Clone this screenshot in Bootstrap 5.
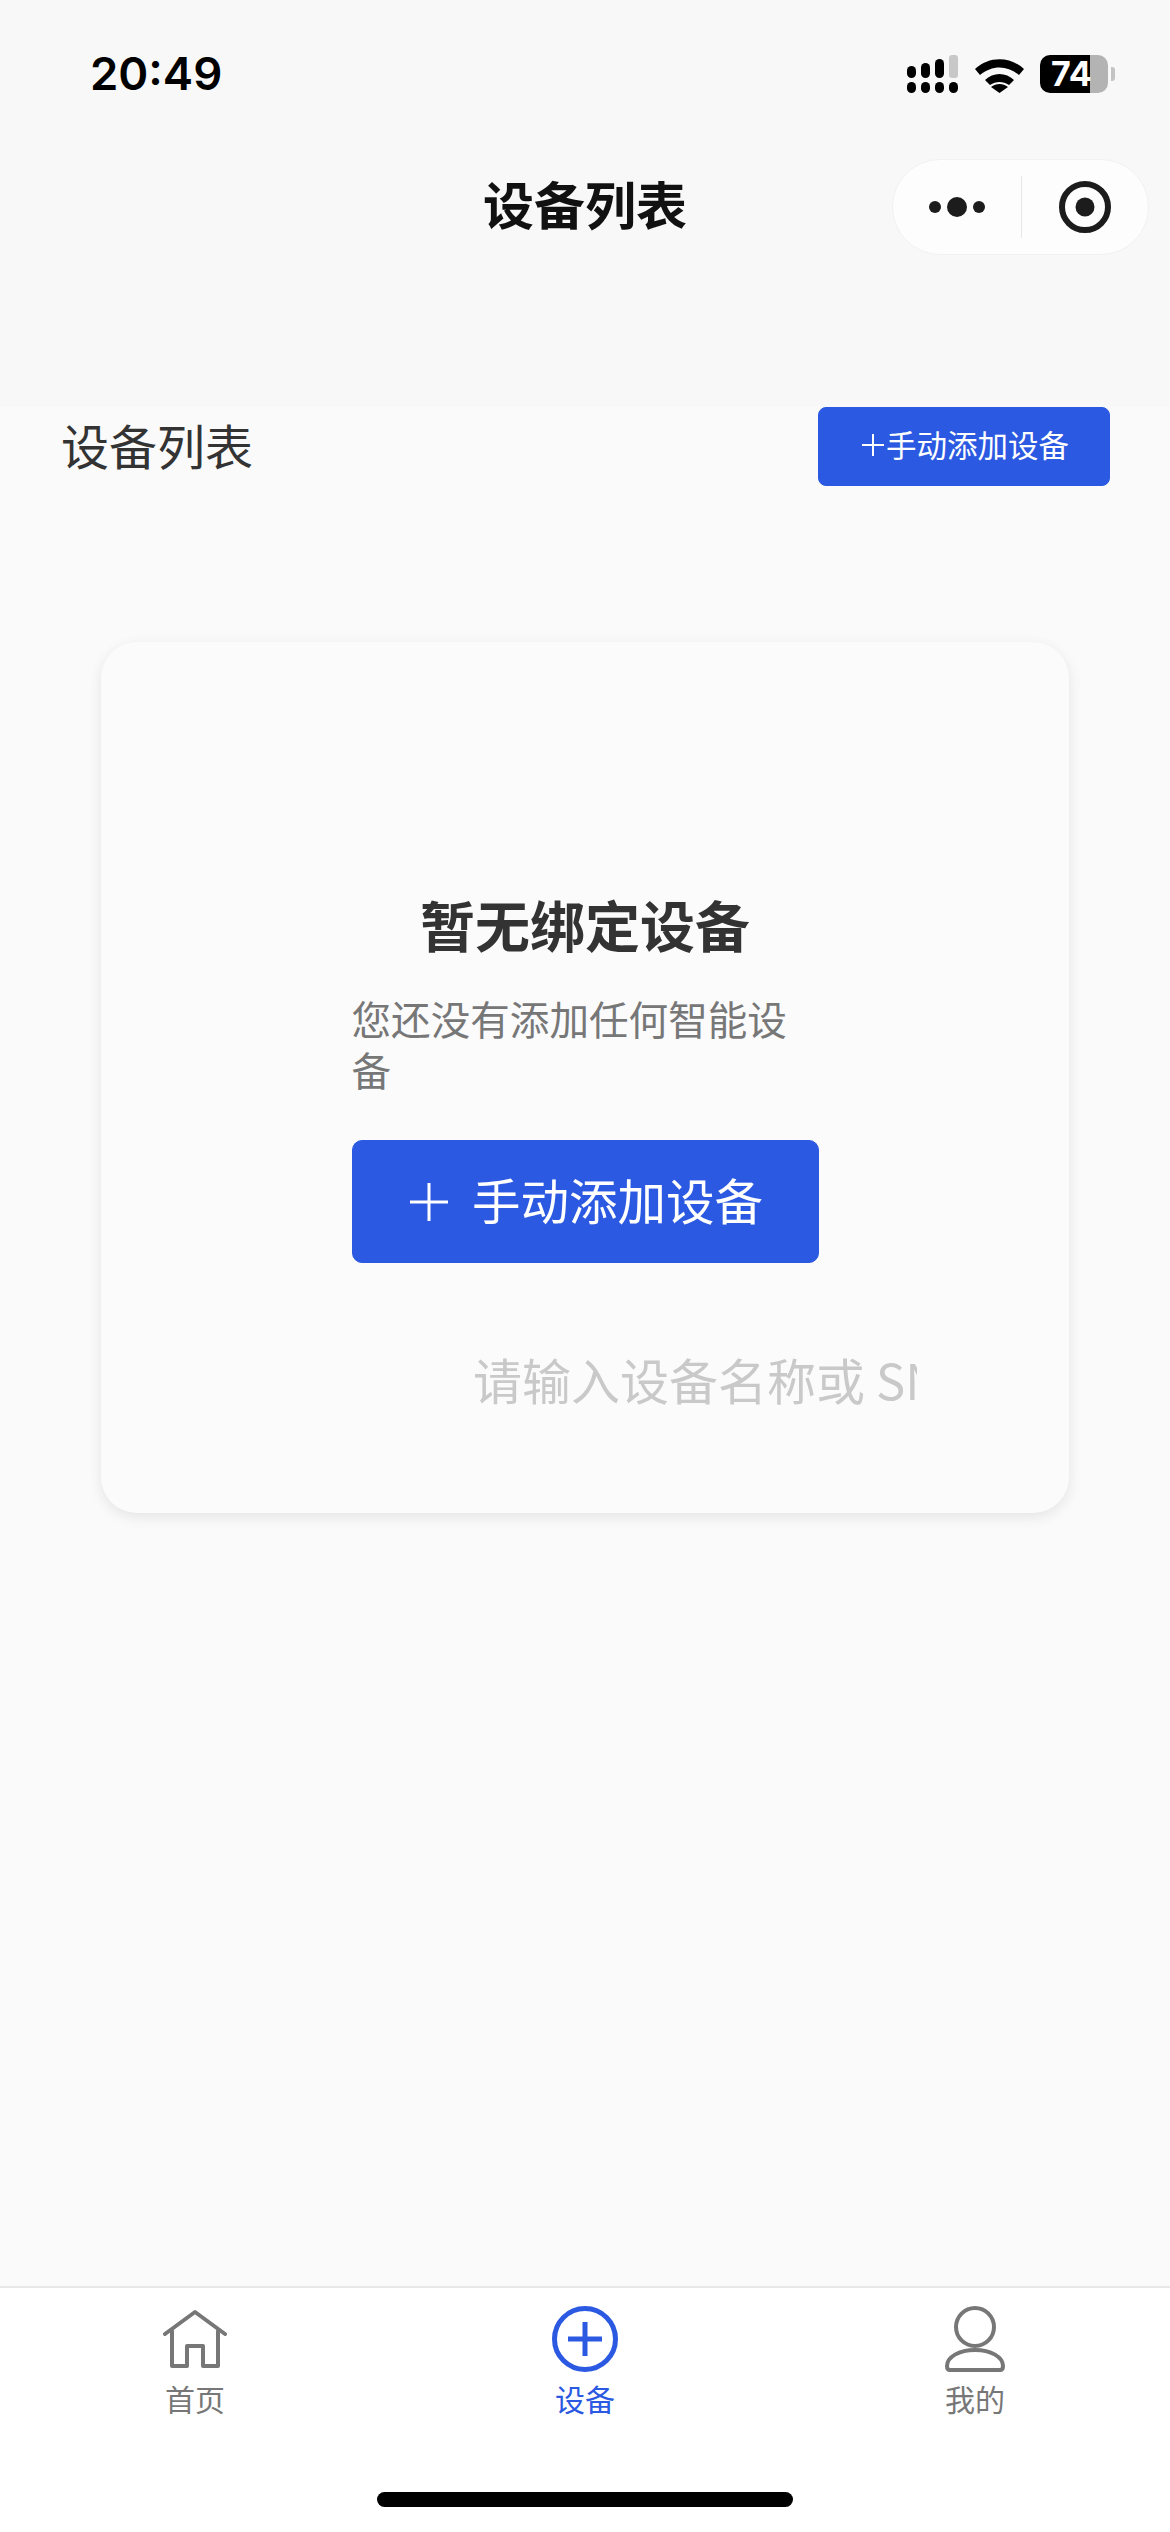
<!DOCTYPE html>
<html lang="zh-CN">
<head>
<meta charset="utf-8">
<title>设备列表</title>
<link href="https://cdn.jsdelivr.net/npm/bootstrap@5.3.0/dist/css/bootstrap.min.css" rel="stylesheet">
<style>
html,body{margin:0;height:100%}
body{background:#fafafa;font-family:"Noto Sans CJK SC","Liberation Sans",sans-serif}
.screen{width:1170px;height:2532px;overflow:hidden}
.top-area{height:407px;background:#f8f8f8;flex:none}
.status-line{height:148px;padding:0 55px 0 90px}
.clock{font-family:Inter,"Liberation Sans",sans-serif;font-weight:600;font-size:45.500px;color:#000;line-height:1}
.sig{width:51px;height:38px;margin-right:17px}
.wifi{width:49px;height:37px;margin-right:16px}
.batt{width:68px;height:38px;border-radius:10px;background:linear-gradient(90deg,#000 0 50px,#b3b3b3 50px 68px);color:#fff;font-family:Inter,"Liberation Sans",sans-serif;font-weight:700;font-size:34px;line-height:38px;padding-left:11px}
.batt-tip{width:4px;height:14px;background:#c4c4c4;border-radius:0 3px 3px 0;margin-left:3px}
.nav-line{height:118px;display:grid;grid-template-columns:1fr auto 1fr;align-items:center}
.nav-name{font-size:51px;font-weight:700;color:#111;line-height:1;white-space:nowrap;padding-bottom:7px}
.pill{justify-self:end;width:257px;height:96px;margin-right:21px;background:#fdfdfd;border:1px solid #f1f1f1;border-radius:48px}
.pill-half{width:128px;height:62px}
.pill-half+.pill-half{border-left:1px solid #e6e6e6}
.dots{margin-left:8px}
.head-row{padding:0 60px 0 61px}
.head-name{font-size:48px;color:#333;line-height:1.3;padding-bottom:4px}
.btn.add-small{--bs-btn-bg:#2b59e1;--bs-btn-hover-bg:#2b59e1;--bs-btn-color:#fff;--bs-btn-border-color:#2b59e1;width:292px;height:79px;padding:0 0 4px 3px;font-size:30.500px;line-height:1;border-radius:8px;gap:0}
.empty-card{width:968px;height:871px;margin:156px 0 0 101px;background:#fbfbfc;border:0;border-radius:36px;box-shadow:0 4px 14px rgba(0,0,0,.09);padding-top:241px}
.empty-title{font-size:55px;font-weight:700;color:#333;line-height:81px;margin:0}
.empty-text{width:467px;font-size:39.600px;line-height:51px;color:#777;margin:28px auto 0;text-align:left;word-break:break-all}
.btn.add-big{--bs-btn-bg:#2b59e1;--bs-btn-hover-bg:#2b59e1;--bs-btn-color:#fff;--bs-btn-border-color:#2b59e1;width:467px;height:123px;padding:0 0 5px;font-size:48.500px;line-height:1;border-radius:10px;margin:46px auto 0;gap:24px}
.btn.add-big svg{margin-top:5px;margin-left:3px}
.form-control.search-box{width:444px;height:96px;margin:68px 0 0 372px;padding:0;background:transparent;border:0;box-shadow:none;font-size:49px;line-height:96px}
.form-control.search-box::placeholder{color:#c9c9c9;opacity:1}
.tab-area{height:246px;flex:none;background:#fff;border-top:2px solid #e8e8e8}
.tab-icon{height:68px;margin-top:17px}
.tab-word{font-size:30px;line-height:48px;color:#777;margin-top:1px}
.tab-word.on{color:#2b59e1}
.home-bar{width:416px;height:15px;background:#000;border-radius:8px;margin:70px auto 0}
</style>
</head>
<body>
<div class="screen d-flex flex-column">
  <div class="top-area">
    <div class="status-line d-flex align-items-center justify-content-between">
      <span class="clock">20:49</span>
      <div class="d-flex align-items-center">
        <svg class="sig" viewBox="0 0 51 38">
          <rect x="0" y="11" width="9" height="12" rx="4.5"/>
          <rect x="14" y="8" width="9" height="15" rx="4.5"/>
          <rect x="28" y="4" width="9" height="19" rx="4.5"/>
          <rect x="42" y="0" width="9" height="23" rx="3" fill="#c8c8c8"/>
          <rect x="0" y="27" width="9" height="11" rx="4.5"/>
          <rect x="14" y="27" width="9" height="11" rx="4.5"/>
          <rect x="28" y="27" width="9" height="11" rx="4.5"/>
          <rect x="42" y="27" width="9" height="11" rx="4.5"/>
        </svg>
        <svg class="wifi" viewBox="0 0 49 37">
          <path d="M0 13C14 0 35 0 49 13l-5 6C32 9 17 9 5 19z"/>
          <path d="M10 24c8-8 21-8 29 0l-5 5c-6-4-13-4-19 0z"/>
          <path d="M24.500 37 16 31c5-4 12-4 17 0z"/>
        </svg>
        <div class="batt">74</div>
        <div class="batt-tip"></div>
      </div>
    </div>
    <div class="nav-line">
      <div></div>
      <div class="nav-name">设备列表</div>
      <div class="pill d-flex align-items-center">
        <div class="pill-half d-flex align-items-center justify-content-center">
          <svg class="dots" width="66" height="24" viewBox="0 0 66 24"><circle cx="7" cy="12" r="6" fill="#1c1c1c"/><circle cx="29" cy="12" r="10" fill="#1c1c1c"/><circle cx="51" cy="12" r="6" fill="#1c1c1c"/></svg>
        </div>
        <div class="pill-half d-flex align-items-center justify-content-center">
          <svg width="56" height="56" viewBox="0 0 56 56"><circle cx="28" cy="28" r="23" fill="none" stroke="#1c1c1c" stroke-width="6"/><circle cx="28" cy="28" r="9.500" fill="#1c1c1c"/></svg>
        </div>
      </div>
    </div>
  </div>

  <main class="flex-grow-1">
    <div class="head-row d-flex justify-content-between align-items-center">
      <div class="head-name">设备列表</div>
      <button type="button" class="btn add-small d-flex align-items-center justify-content-center">
        <svg width="24" height="24" viewBox="0 0 24 24"><path d="M0 12H22M11 1V23" stroke="#fff" stroke-width="2"/></svg>
        <span>手动添加设备</span>
      </button>
    </div>
    <div class="card empty-card">
      <h2 class="empty-title text-center">暂无绑定设备</h2>
      <p class="empty-text">您还没有添加任何智能设备</p>
      <button type="button" class="btn add-big d-flex align-items-center justify-content-center">
        <svg width="38" height="38" viewBox="0 0 38 38"><path d="M0 19H38M19 0V38" stroke="#fff" stroke-width="3"/></svg>
        <span>手动添加设备</span>
      </button>
      <input class="form-control search-box" type="text" placeholder="请输入设备名称或 SN码">
    </div>
  </main>

  <nav class="tab-area">
    <div class="row g-0 text-center">
      <div class="col-4">
        <div class="tab-icon d-flex align-items-center justify-content-center">
          <svg width="64" height="60" viewBox="0 0 64 60" fill="none" stroke="#777" stroke-width="4" stroke-linejoin="round" stroke-linecap="round"><path d="M2 25 32 3l30 22"/><path d="M9 22V57H24V37H40V57H55V22"/></svg>
        </div>
        <div class="tab-word">首页</div>
      </div>
      <div class="col-4">
        <div class="tab-icon d-flex align-items-center justify-content-center">
          <svg width="66" height="66" viewBox="0 0 66 66" fill="none" stroke="#2b59e1"><circle cx="33" cy="33" r="30.500" stroke-width="5"/><path d="M16 33H50M33 16V50" stroke-width="5"/></svg>
        </div>
        <div class="tab-word on">设备</div>
      </div>
      <div class="col-4">
        <div class="tab-icon d-flex align-items-center justify-content-center">
          <svg width="62" height="66" viewBox="0 0 62 66" fill="none" stroke="#777" stroke-width="4" stroke-linejoin="round"><circle cx="31" cy="21" r="19"/><path d="M3 60C3 51 15 44 31 44s28 7 28 16c0 3-1 4-3 4H6c-2 0-3-1-3-4z"/></svg>
        </div>
        <div class="tab-word">我的</div>
      </div>
    </div>
    <div class="home-bar"></div>
  </nav>
</div>
<script src="https://cdn.jsdelivr.net/npm/bootstrap@5.3.0/dist/js/bootstrap.bundle.min.js"></script>
</body>
</html>
